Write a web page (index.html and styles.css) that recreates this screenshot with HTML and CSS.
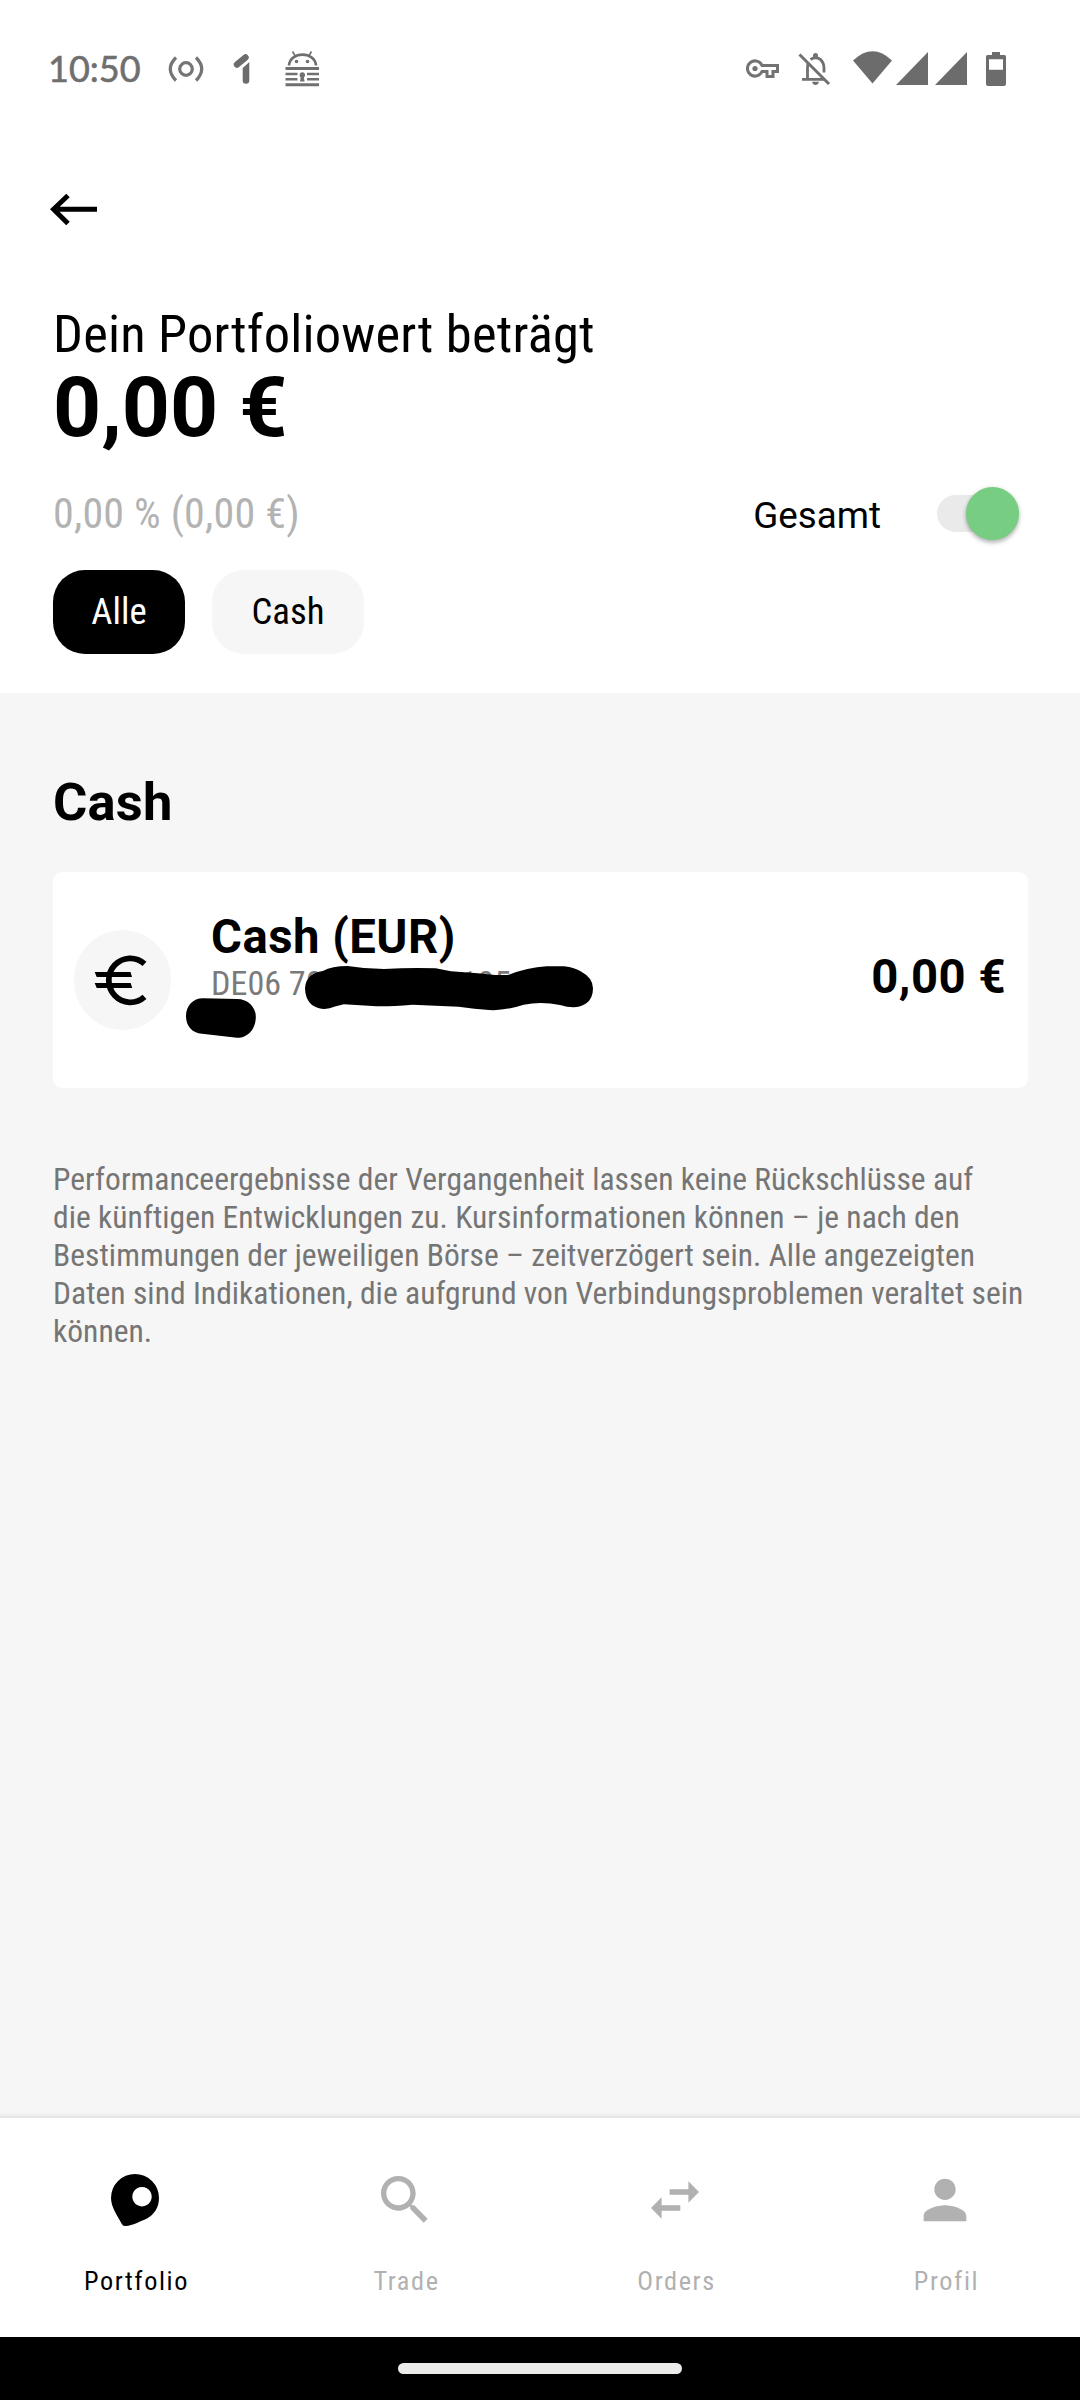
FILE: index.html
```html
<!DOCTYPE html>
<html lang="de">
<head>
<meta charset="utf-8">
<title>Portfolio</title>
<link rel="stylesheet" href="styles.css">
</head>
<body>
<div class="screen">
  <div class="status">
    <span class="clock">10:50</span>
    <svg class="s-hotspot" width="36" height="30" viewBox="168 54 36 30" fill="none" stroke="#757575"><circle cx="186" cy="69" r="6.3" stroke-width="3.2"/><path d="M176 57.5Q164.500 69 176 80.500M196 57.500Q207.500 69 196 80.500" stroke-width="3.200"/></svg>
    <svg class="s-one" width="18" height="32" viewBox="233 53 18 32"><path d="M237 64.500L245.500 57.500" stroke="#6c6c6c" stroke-width="6.400" stroke-linecap="round"/><path d="M249.300 62V80.500a3.300 3.300 0 0 1-6.600 0V68Z" fill="#6c6c6c"/></svg>
    <svg class="s-droid" width="34" height="36" viewBox="285 51 34 36" fill="none" stroke="#707070"><path d="M289 65.500C290 51 315 51 316 65.500" stroke-width="2.600"/><path d="M292.500 51.500l3 5M311.500 51.500l-3 5" stroke-width="1.600"/><path d="M285.500 68.500h33.500M285.500 84.700h33.500" stroke-width="3"/><path d="M285.500 74h12M307 74h12M285.500 79.300h12M307 79.300h12" stroke-width="2.600"/><g fill="#707070" stroke="none"><circle cx="296.500" cy="61.500" r="1.800"/><circle cx="307.500" cy="61.500" r="1.800"/><circle cx="302.300" cy="75" r="2.700"/><path d="M301 76h2.600l1 5.500h-4.600z"/></g></svg>
    <span class="spacer"></span>
    <svg class="s-key" width="34" height="22" viewBox="746 58 34 22" fill="none" stroke="#737373"><path d="M762 65.500A7.600 7.600 0 1 0 762 71.500H767V76.500H773V71.500H777.500V65.500Z" stroke-width="3"/><circle cx="755" cy="68.500" r="2.600" fill="#737373" stroke="none"/></svg>
    <svg class="s-bell" width="34" height="34" viewBox="797 52 34 34"><path d="M802 79.300H825M807.500 79V67.500Q807.500 64.500 808.500 62.500M810.500 59.500Q815.500 56 820.500 59.500Q824 63 824 68V72.500" fill="none" stroke="#707070" stroke-width="2.800"/><circle cx="815.500" cy="55.500" r="2.500" fill="#707070"/><path d="M812 81.800h7q-1 3.200-3.500 3.200t-3.500-3.200z" fill="#707070"/><path d="M799.500 54.500L829 84" stroke="#707070" stroke-width="3"/></svg>
    <svg class="s-wifi" width="40" height="34" viewBox="853 50 40 34"><path d="M853 60.500Q872.500 42 892 60.500L872.500 83.500Z" fill="#6c6c6c"/></svg>
    <svg class="s-cell" width="32" height="33" viewBox="0 0 32 33"><path d="M32 0V33H0Z" fill="#6c6c6c"/></svg>
    <svg class="s-cell2" width="32" height="33" viewBox="0 0 32 33"><path d="M32 0V33H0Z" fill="#6c6c6c"/></svg>
    <svg class="s-batt" width="20" height="34" viewBox="986 51 20 34"><path fill-rule="evenodd" d="M992 51h8v3h4.500q1.500 0 1.500 1.500v27.500q0 2-2 2h-16q-2 0-2-2V55.500q0-1.500 1.500-1.500h4.500zM989 58.300v10.400h14V58.300z" fill="#6c6c6c"/></svg>
  </div>

  <header class="top">
    <svg class="back" width="48" height="32" viewBox="50 193 48 32" fill="none" stroke="#000" stroke-width="5"><path d="M97 209.300H54M68 195.500L53.500 209.300L68 223.500"/></svg>
    <h1 class="title">Dein Portfoliowert beträgt</h1>
    <div class="total">0,00 €</div>
    <div class="perf">
      <span class="change">0,00 % (0,00 €)</span>
      <span class="toggle-label">Gesamt</span>
      <span class="toggle"><span class="track"></span><span class="thumb"></span></span>
    </div>
    <div class="chips"><span class="chip on">Alle</span><span class="chip">Cash</span></div>
  </header>

  <main class="content">
    <h2 class="section">Cash</h2>
    <div class="card">
      <div class="avatar"><svg width="54" height="54" viewBox="94 952 54 54"><path d="M144.500 962.800A21.500 22 0 1 0 144.500 995.800" fill="none" stroke="#000" stroke-width="5.800"/><path d="M94.700 971h35.800l1.500 5H96.700zM94.700 982h36l1.500 5H96.700z"/></svg></div>
      <div class="info">
        <div class="name">Cash (EUR)</div>
        <div class="iban"><span>DE06 70</span><span class="tail">105</span></div>
      </div>
      <div class="amount">0,00 €</div>
      <svg class="redact" width="410" height="74" viewBox="185 965 410 74"><path d="M305 988Q305.500 980 311 975.500Q315 972 322.800 971Q332 966 347.600 966Q366 969 384 969Q410 967.500 435.700 968.300L451 971.300L477.800 973.300L495 975H508Q527.500 967.500 546.600 966.300H564Q575 967.500 581 971.500Q593 978 593 988.300Q593 999 586 1003.500Q577 1010 560 1005Q541 1001 523.700 1004.700Q504.500 1011 489 1010Q475 1009 458.600 1006.700L412.700 1004.700Q385 1007 372.500 1006L343.800 1004.300L335 1006.500Q322.800 1012 312 1005Q305 999 305 988Z"/><path d="M186 1016C186 1006 193 998.300 203 998.300L237 999C248 999 255.800 1007 255.800 1017C255.800 1029 248 1038 237 1037.800L202 1033.800C192 1033 186 1026 186 1016Z"/></svg>
    </div>
    <p class="note">Performanceergebnisse der Vergangenheit lassen keine Rückschlüsse auf<br>die künftigen Entwicklungen zu. Kursinformationen können – je nach den<br>Bestimmungen der jeweiligen Börse – zeitverzögert sein. Alle angezeigten<br>Daten sind Indikationen, die aufgrund von Verbindungsproblemen veraltet sein<br>können.</p>
  </main>

  <nav class="nav">
    <div class="tab active"><svg width="64" height="64" viewBox="103 2168 64 64"><path fill-rule="evenodd" d="M135 2174a24 24 0 0 1 24 24C159 2208 153.500 2215 147 2218.500C140 2221.500 133 2225.500 125.500 2226Q123 2226.500 121.500 2223.500C117.500 2216 111 2207 111 2198A24 24 0 0 1 135 2174ZM142 2187a9.700 9.700 0 1 0 .01 0Z"/></svg><span>Portfolio</span></div>
    <div class="tab"><svg width="64" height="64" viewBox="0 0 24 24"><path d="M15.500 14h-.79l-.28-.27C15.410 12.590 16 11.110 16 9.500 16 5.910 13.090 3 9.500 3S3 5.910 3 9.500 5.910 16 9.500 16c1.610 0 3.090-.59 4.230-1.570l.27.28v.79l5 4.990L20.490 19l-4.990-5zm-6 0C7.010 14 5 11.990 5 9.500S7.010 5 9.500 5 14 7.010 14 9.500 11.990 14 9.500 14z"/></svg><span>Trade</span></div>
    <div class="tab"><svg width="64" height="64" viewBox="0 0 24 24"><path d="M6.990 11L3 15l3.990 4v-3H14v-2H6.990v-3zM21 9l-3.990-4v3H10v2h7.010v3L21 9z"/></svg><span>Orders</span></div>
    <div class="tab"><svg width="64" height="64" viewBox="0 0 24 24"><path d="M12 12c2.210 0 4-1.790 4-4s-1.790-4-4-4-4 1.790-4 4 1.790 4 4 4zm0 2c-2.670 0-8 1.340-8 4v2h16v-2c0-2.660-5.330-4-8-4z"/></svg><span>Profil</span></div>
  </nav>
  <div class="gesture"><span class="pill"></span></div>
</div>
</body>
</html>
```
FILE: styles.css
```css
* { box-sizing: border-box; }
body { margin: 0; background: #fff; color: #000; font-family: "Roboto Condensed", Roboto, sans-serif; font-stretch: 75%; }
svg { display: block; flex: none; }
h1, h2, p { margin: 0; font-weight: 400; }
.screen { width: 1080px; height: 2400px; display: flex; flex-direction: column; overflow: hidden; }

.status { height: 137px; padding: 0 74px 0 48px; display: flex; align-items: center; flex: none; }
.clock { width: 120px; margin-top: -1px; font: 400 36px/44px Lato, sans-serif; color: #6f6f6f; -webkit-text-stroke: .6px #6f6f6f; }
.s-one { margin-left: 29px; }
.s-droid { margin-left: 34px; }
.spacer { flex: 1; }
.s-bell { margin-left: 17px; }
.s-wifi { margin-left: 22px; margin-bottom: 3px; }
.s-cell { margin-left: 3px; }
.s-cell2 { margin-left: 7px; }
.s-batt { margin-left: 19px; }

.top { height: 556px; padding: 56px 61px 0 53px; display: flex; flex-direction: column; align-items: flex-start; flex: none; }
.back { margin-left: -3px; }
.title { margin-top: 78px; font-size: 52.500px; line-height: 62px; letter-spacing: .2px; white-space: nowrap; }
.total, .section, .name, .amount { font-family: Roboto, sans-serif; font-stretch: 100%; font-weight: 700; }
.total { font-size: 84px; line-height: 98px; margin-top: -6px; }
.perf { margin-top: 30px; align-self: stretch; height: 53px; display: flex; align-items: center; }
.change { font-size: 42px; letter-spacing: .2px; color: #b3b3b3; flex: 1; }
.toggle-label { font-family: Roboto, sans-serif; font-size: 36.750px; font-stretch: 100%; margin-right: 56px; margin-top: 4px; }
.toggle { width: 82px; height: 53px; display: flex; align-items: center; }
.track { width: 64px; height: 37px; border-radius: 19px; background: #e9eae9; }
.thumb { width: 53px; height: 53px; flex: none; margin-left: -35px; border-radius: 50%; background: #77cd81; box-shadow: 0 3px 4px rgba(0,0,0,.25), 0 0 4px rgba(0,0,0,.1); }
.chips { display: flex; gap: 27px; margin-top: 30px; }
.chip { width: 152px; height: 84px; text-align: center; border-radius: 32px; background: #f6f6f6; font-size: 36.750px; line-height: 83px; }
.chip.on { width: 132px; background: #000; color: #fff; }

.content { flex: 1; background: #f6f6f6; padding: 78px 52px 0 53px; }
.section { font-size: 52.500px; line-height: 62px; letter-spacing: .2px; }
.card { position: relative; margin-top: 39px; height: 216px; background: #fff; border-radius: 9px; display: flex; padding: 0 22px 0 21px; }
.avatar { margin-top: 58px; width: 97px; height: 100px; border-radius: 50%; background: #f6f6f6; display: flex; align-items: center; padding-left: 20px; }
.info { margin: 37px 0 0 40px; flex: 1; }
.name { font-size: 47.250px; line-height: 56px; letter-spacing: .5px; }
.iban { margin-top: -2px; font-size: 34.100px; line-height: 40px; color: #7a7a7a; display: flex; }
.tail { margin-left: 138px; }
.amount { margin-top: 77px; font-size: 47.250px; line-height: 56px; letter-spacing: .5px; }
.redact { position: absolute; left: 132px; top: 93px; }
.note { margin-top: 73px; font-size: 31.500px; line-height: 38px; letter-spacing: .05px; color: #757575; white-space: nowrap; }

.nav { height: 219px; background: #fff; display: flex; flex: none; position: relative; box-shadow: 0 -2px 0 #e6e6e6, 0 -3px 4px rgba(0,0,0,.06); }
.tab { flex: 1; display: flex; flex-direction: column; align-items: center; padding-top: 50px; color: #b1b1b1; fill: #b1b1b1; font-size: 26.250px; line-height: 32px; letter-spacing: 1.600px; }
.tab span { margin-top: 33px; padding-left: 3px; }
.tab.active { color: #000; fill: #000; }
.gesture { height: 63px; background: #000; flex: none; display: flex; justify-content: center; padding-top: 26px; }
.pill { width: 284px; height: 11px; border-radius: 6px; background: #ebebe9; }
```
